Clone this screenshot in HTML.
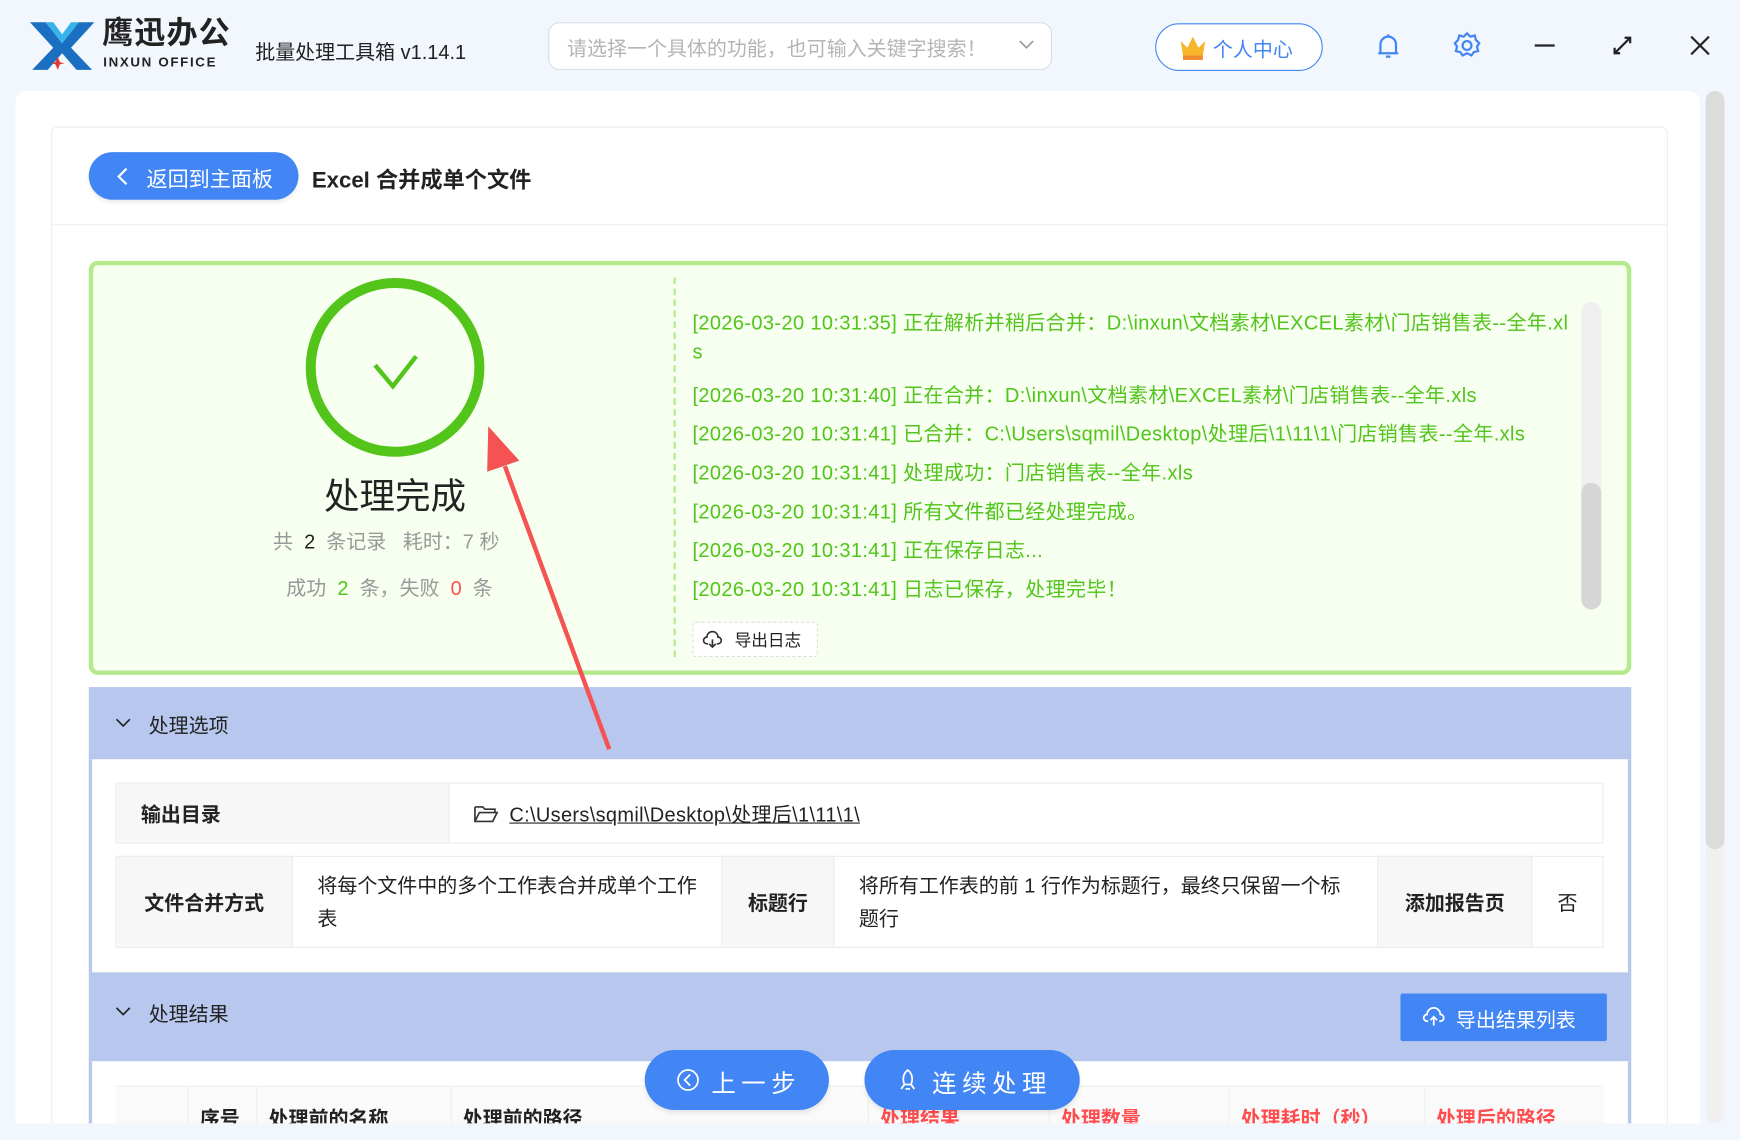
<!DOCTYPE html>
<html><head><meta charset="utf-8"><style>
*{margin:0;padding:0;box-sizing:border-box}
html,body{width:1740px;height:1140px;overflow:hidden;background:#f2f6fd}
body{font-family:"Liberation Sans","Noto Sans CJK SC",sans-serif;color:#222}
#w{position:absolute;left:0;top:0;width:1568px;height:1027px;transform:scale(1.1097,1.1100);transform-origin:0 0;background:#f2f6fd}
.a{position:absolute}
.t{white-space:nowrap}
.log{position:absolute;left:624px;color:#52c41a;font-size:18px;white-space:nowrap;letter-spacing:0.35px}
.cell{position:absolute;display:flex;align-items:center;font-size:18px;border:1px solid #ececec}
.lb{background:#f7f7f7;font-weight:bold;justify-content:center}
.th{position:absolute;top:978px;height:40px;padding-top:16px;font-size:18px;font-weight:bold;border-left:1px solid #eee;padding-left:10px}
</style></head><body><div id="w">
<svg class="a" style="left:25px;top:18px" width="62" height="46" viewBox="0 0 62 46"><path d="M2 2h14l15 19 15-19h14L39 25l19 20H44L31 30 18 45H4l19-20z" fill="#1a6fc0"/><path d="M16 2l15 19 15-19h-7l-8 11-8-11z" fill="#35b3ea"/><path d="M27 33l2 5 4 1-4 1-2 5-2-5-4-1 4-1z" fill="#e53935"/></svg>
<div class="a t" style="left:92px;top:13px;font-size:28px;line-height:34px;font-weight:bold;letter-spacing:1px;color:#222">鹰迅办公</div>
<div class="a t" style="left:93px;top:49px;font-size:12px;line-height:14px;font-weight:bold;letter-spacing:1.5px;color:#222">INXUN OFFICE</div>
<div class="a t" style="left:230px;top:33px;font-size:18px">批量处理工具箱 v1.14.1</div>
<div class="a" style="left:494px;top:20px;width:454px;height:43px;border:1px solid #d8dbe0;border-radius:10px;background:#fff"></div>
<div class="a t" style="left:511px;top:30px;font-size:18px;color:#b5b5b5">请选择一个具体的功能，也可输入关键字搜索！</div>
<svg class="a" style="left:917px;top:34px" width="16" height="12"><path d="M2 3l6 6 6-6" fill="none" stroke="#999" stroke-width="1.5"/></svg>
<div class="a" style="left:1041px;top:21px;width:151px;height:43px;border:1px solid #4285f4;border-radius:22px;background:#fff"></div>
<svg class="a" style="left:1062px;top:31px" width="26" height="24"><path d="M2 6l6 6 5-10 5 10 6-6-2 13H4z" fill="#f7b52c"/><rect x="4" y="19" width="18" height="4" fill="#f08a2c"/></svg>
<div class="a t" style="left:1093px;top:31px;font-size:18px;color:#4285f4">个人中心</div>
<svg class="a" style="left:1240px;top:29px" width="22" height="26"><path d="M4 19V11a7 7 0 0 1 14 0v8zM2 19h18M9 22h4M11 2v2" fill="none" stroke="#4285f4" stroke-width="2"/></svg>
<svg class="a" style="left:1309px;top:28px" width="26" height="26"><circle cx="13" cy="13" r="4" fill="none" stroke="#4285f4" stroke-width="2"/><path d="M13 2l3 3 4-1 1 4 3 3-2 3 1 4-4 1-2 3-4-2-4 2-2-3-4-1 1-4-2-3 3-3 1-4 4 1z" fill="none" stroke="#4285f4" stroke-width="2"/></svg>
<div class="a" style="left:1383px;top:40px;width:18px;height:2px;background:#222"></div>
<svg class="a" style="left:1452px;top:31px" width="20" height="20"><path d="M3 17L17 3M12 3h5v5M3 12v5h5" fill="none" stroke="#222" stroke-width="2"/></svg>
<svg class="a" style="left:1523px;top:32px" width="18" height="18"><path d="M1 1l16 16M17 1L1 17" stroke="#222" stroke-width="2"/></svg>
<div class="a" style="left:14px;top:82px;width:1518px;height:940px;background:#fff;border-radius:10px"></div>
<div class="a" style="left:1537px;top:82px;width:17px;height:930px;background:#f0f0f0;border-radius:9px"></div>
<div class="a" style="left:1537px;top:82px;width:17px;height:683px;background:#dcdcdc;border-radius:9px"></div>
<div class="a" style="left:46px;top:114px;width:1457px;height:910px;border:1px solid #eee;border-radius:6px"></div>
<div class="a" style="left:46px;top:202px;width:1457px;height:1px;background:#eee"></div>
<div class="a" style="left:80px;top:137px;width:189px;height:43px;background:#4285f4;border-radius:22px;box-shadow:0 3px 3px #eee"></div>
<svg class="a" style="left:104px;top:150px" width="12" height="18"><path d="M10 2L3 9l7 7" fill="none" stroke="#fff" stroke-width="2"/></svg>
<div class="a t" style="left:132px;top:147px;font-size:19px;color:#fff">返回到主面板</div>
<div class="a t" style="left:281px;top:146px;font-size:20px;font-weight:bold">Excel 合并成单个文件</div>
<div class="a" style="left:80px;top:235px;width:1390px;height:373px;border:4px solid #b5ea8c;border-radius:8px;background:#f6fff0"></div>
<svg class="a" style="left:274px;top:249px" width="164" height="164"><circle cx="82" cy="82" r="76" fill="none" stroke="#52c41a" stroke-width="9"/><path d="M64 80l16 19 21-27" fill="none" stroke="#52c41a" stroke-width="4"/></svg>
<div class="a t" style="left:256px;top:422px;width:200px;text-align:center;font-size:32px">处理完成</div>
<div class="a t" style="left:246px;top:474px;font-size:18px;color:#999">共 <b style="color:#222;font-weight:normal">&nbsp;2&nbsp;</b> 条记录 &nbsp;&nbsp;耗时：7 秒</div>
<div class="a t" style="left:258px;top:516px;font-size:18px;color:#999">成功 <span style="color:#52c41a">&nbsp;2&nbsp;</span> 条，失败 <span style="color:#ff4d4f">&nbsp;0&nbsp;</span> 条</div>
<div class="a" style="left:607px;top:250px;height:342px;border-left:2px dashed #b5ea8c"></div>
<div class="log" style="top:277px">[2026-03-20 10:31:35] 正在解析并稍后合并：D:\inxun\文档素材\EXCEL素材\门店销售表--全年.xl</div>
<div class="log" style="top:307px">s</div>
<div class="log" style="top:342px">[2026-03-20 10:31:40] 正在合并：D:\inxun\文档素材\EXCEL素材\门店销售表--全年.xls</div>
<div class="log" style="top:377px">[2026-03-20 10:31:41] 已合并：C:\Users\sqmil\Desktop\处理后\1\11\1\门店销售表--全年.xls</div>
<div class="log" style="top:412px">[2026-03-20 10:31:41] 处理成功：门店销售表--全年.xls</div>
<div class="log" style="top:447px">[2026-03-20 10:31:41] 所有文件都已经处理完成。</div>
<div class="log" style="top:482px">[2026-03-20 10:31:41] 正在保存日志...</div>
<div class="log" style="top:517px">[2026-03-20 10:31:41] 日志已保存，处理完毕！</div>
<div class="a" style="left:1425px;top:272px;width:18px;height:277px;background:#f0f0f0;border-radius:9px"></div>
<div class="a" style="left:1425px;top:435px;width:18px;height:114px;background:#d6d6d6;border-radius:9px"></div>
<div class="a" style="left:624px;top:560px;width:113px;height:32px;border:1px dashed #ddd;background:#fff;border-radius:3px"></div>
<svg class="a" style="left:633px;top:568px" width="18" height="16"><path d="M5 12H4a3 3 0 0 1 0-6 5 5 0 0 1 10 0 3 3 0 0 1 0 6h-1M9 8v7M6 12l3 3 3-3" fill="none" stroke="#333" stroke-width="1.5"/></svg>
<div class="a t" style="left:662px;top:566px;font-size:15px">导出日志</div>
<div class="a" style="left:80px;top:619px;width:1390px;height:65px;background:#b7c7ee"></div>
<svg class="a" style="left:103px;top:645px" width="16" height="12"><path d="M2 3l6 6 6-6" fill="none" stroke="#222" stroke-width="1.5"/></svg>
<div class="a t" style="left:134px;top:640px;font-size:18px">处理选项</div>
<div class="a" style="left:80px;top:684px;width:1390px;height:192px;border-left:3px solid #b7c7ee;border-right:3px solid #b7c7ee"></div>
<div class="cell lb" style="left:104px;top:705px;width:301px;height:55px;justify-content:flex-start;padding-left:22px">输出目录</div>
<div class="cell" style="left:404px;top:705px;width:1041px;height:55px;padding-left:22px"><svg width="22" height="18" style="margin-right:10px"><path d="M1 3h7l2 2h9v3M1 3v13h16l4-8H5L1 16" fill="none" stroke="#333" stroke-width="1.5"/></svg><span style="text-decoration:underline;letter-spacing:0.3px">C:\Users\sqmil\Desktop\处理后\1\11\1\</span></div>
<div class="cell lb" style="left:104px;top:771px;width:160px;height:83px">文件合并方式</div>
<div class="cell" style="left:263px;top:771px;width:388px;height:83px;padding:0 20px 0 22px;white-space:normal;line-height:30px">将每个文件中的多个工作表合并成单个工作表</div>
<div class="cell lb" style="left:650px;top:771px;width:102px;height:83px">标题行</div>
<div class="cell" style="left:751px;top:771px;width:491px;height:83px;padding:0 26px 0 22px;line-height:30px">将所有工作表的前 1 行作为标题行，最终只保留一个标题行</div>
<div class="cell lb" style="left:1241px;top:771px;width:140px;height:83px">添加报告页</div>
<div class="cell" style="left:1380px;top:771px;width:65px;height:83px;justify-content:center">否</div>
<div class="a" style="left:80px;top:876px;width:1390px;height:80px;background:#b7c7ee"></div>
<svg class="a" style="left:103px;top:905px" width="16" height="12"><path d="M2 3l6 6 6-6" fill="none" stroke="#222" stroke-width="1.5"/></svg>
<div class="a t" style="left:134px;top:900px;font-size:18px">处理结果</div>
<div class="a" style="left:1262px;top:895px;width:186px;height:43px;background:#4285f4;border-radius:2px"></div>
<svg class="a" style="left:1282px;top:907px" width="20" height="18"><path d="M5 13H4a3 3 0 0 1 0-6 6 6 0 0 1 12 0 3 3 0 0 1 0 6h-1M10 9v8M7 12l3-3 3 3" fill="none" stroke="#fff" stroke-width="1.6"/></svg>
<div class="a t" style="left:1312px;top:905px;font-size:18px;color:#fff">导出结果列表</div>
<div class="a" style="left:80px;top:956px;width:1390px;height:70px;border-left:3px solid #b7c7ee;border-right:3px solid #b7c7ee"></div>
<div class="a" style="left:104px;top:978px;width:1341px;height:40px;background:#fafafa;border-top:1px solid #eee"></div>
<div class="th" style="left:169px">序号</div>
<div class="th" style="left:231px">处理前的名称</div>
<div class="th" style="left:406px">处理前的路径</div>
<div class="th" style="left:782px;color:#ff4d4f">处理结果</div>
<div class="th" style="left:945px;color:#ff4d4f">处理数量</div>
<div class="th" style="left:1107px;color:#ff4d4f">处理耗时（秒）</div>
<div class="th" style="left:1283px;color:#ff4d4f">处理后的路径</div>
<div class="a" style="left:0;top:1012px;width:1568px;height:15px;background:#f2f6fd"></div>
<div class="a" style="left:581px;top:946px;width:166px;height:54px;background:#4285f4;border-radius:27px;box-shadow:0 3px 4px rgba(0,0,0,.08)"></div>
<svg class="a" style="left:609px;top:962px" width="22" height="22"><circle cx="11" cy="11" r="9" fill="none" stroke="#fff" stroke-width="1.6"/><path d="M13 6l-5 5 5 5" fill="none" stroke="#fff" stroke-width="1.6"/></svg>
<div class="a t" style="left:641px;top:959px;font-size:22px;color:#fff;letter-spacing:5px">上一步</div>
<div class="a" style="left:779px;top:946px;width:194px;height:54px;background:#4285f4;border-radius:27px;box-shadow:0 3px 4px rgba(0,0,0,.08)"></div>
<svg class="a" style="left:808px;top:962px" width="20" height="22"><path d="M10 2c4 3 5 8 3 13H7C5 10 6 5 10 2zM7 15l-3 4M13 15l3 4M8 19h4" fill="none" stroke="#fff" stroke-width="1.6"/></svg>
<div class="a t" style="left:840px;top:959px;font-size:22px;color:#fff;letter-spacing:5px">连续处理</div>
<svg class="a" style="left:420px;top:370px" width="150" height="320"><path d="M129 305L35 50" stroke="#f55353" stroke-width="4"/><path d="M20 14L19 55 48 45z" fill="#f55353"/></svg>
</div></body></html>
